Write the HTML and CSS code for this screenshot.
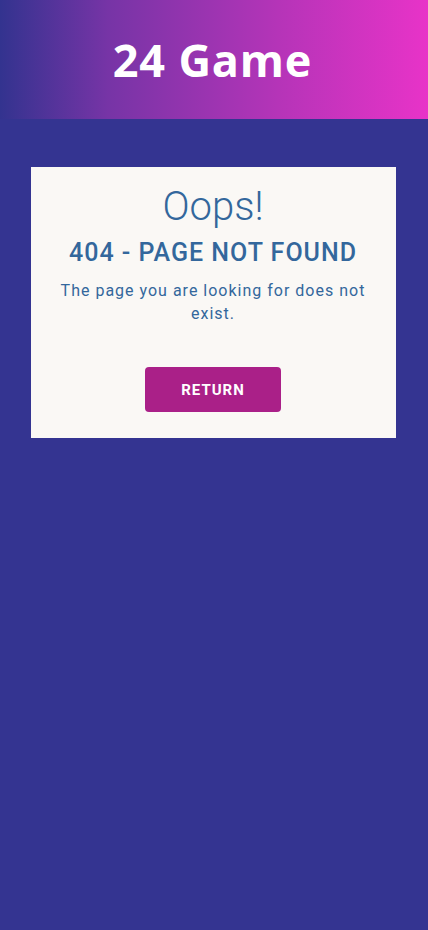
FILE: index.html
```html
<!DOCTYPE html>
<html lang="en">
<head>
<meta charset="utf-8">
<title>24 Game</title>
<link rel="stylesheet" href="styles.css">
</head>
<body>
<header class="header">
  <h1 class="title">24 Game</h1>
</header>
<main class="main">
  <section class="card">
    <h2 class="oops">Oops!</h2>
    <h3 class="code">404 - PAGE NOT FOUND</h3>
    <p class="msg">The page you are looking for does not exist.</p>
    <button class="btn" type="button">RETURN</button>
  </section>
</main>
</body>
</html>
```
FILE: styles.css
```css
* { box-sizing: border-box; }
html, body { margin: 0; padding: 0; }
body {
  background: #343491;
  min-height: 930px;
  font-family: Roboto, "Liberation Sans", sans-serif;
}
.header {
  height: 119px;
  background: linear-gradient(90deg, #33338f 0%, #7634a6 25%, #b534b8 65%, #e833c8 100%);
  display: flex;
  align-items: center;
  justify-content: center;
}
.title {
  margin: 0 0 0 -3px;
  color: #fff;
  font-family: "Open Sans", sans-serif;
  font-weight: 700;
  font-size: 45px;
  letter-spacing: 0.8px;
}
.main {
  padding: 48px 32px 0 31px;
}
.card {
  width: 365px;
  background: #faf8f5;
  padding: 14px 21px 26px 20px;
  display: flex;
  flex-direction: column;
  align-items: center;
  text-align: center;
  color: #33679c;
}
.oops {
  margin: 0;
  font-weight: 300;
  font-size: 40px;
  line-height: 52px;
}
.code {
  margin: 4px 0 0;
  font-weight: 500;
  font-size: 25px;
  letter-spacing: 1px;
  line-height: 32px;
}
.msg {
  margin: 10px 0 0;
  font-size: 16px;
  line-height: 23px;
  letter-spacing: 1px;
}
.btn {
  margin-top: 42px;
  width: 136px;
  height: 45px;
  border: none;
  border-radius: 4px;
  background: #aa2088;
  color: #fff;
  font-family: Roboto, sans-serif;
  font-weight: 700;
  font-size: 15px;
  letter-spacing: 1px;
}
```
